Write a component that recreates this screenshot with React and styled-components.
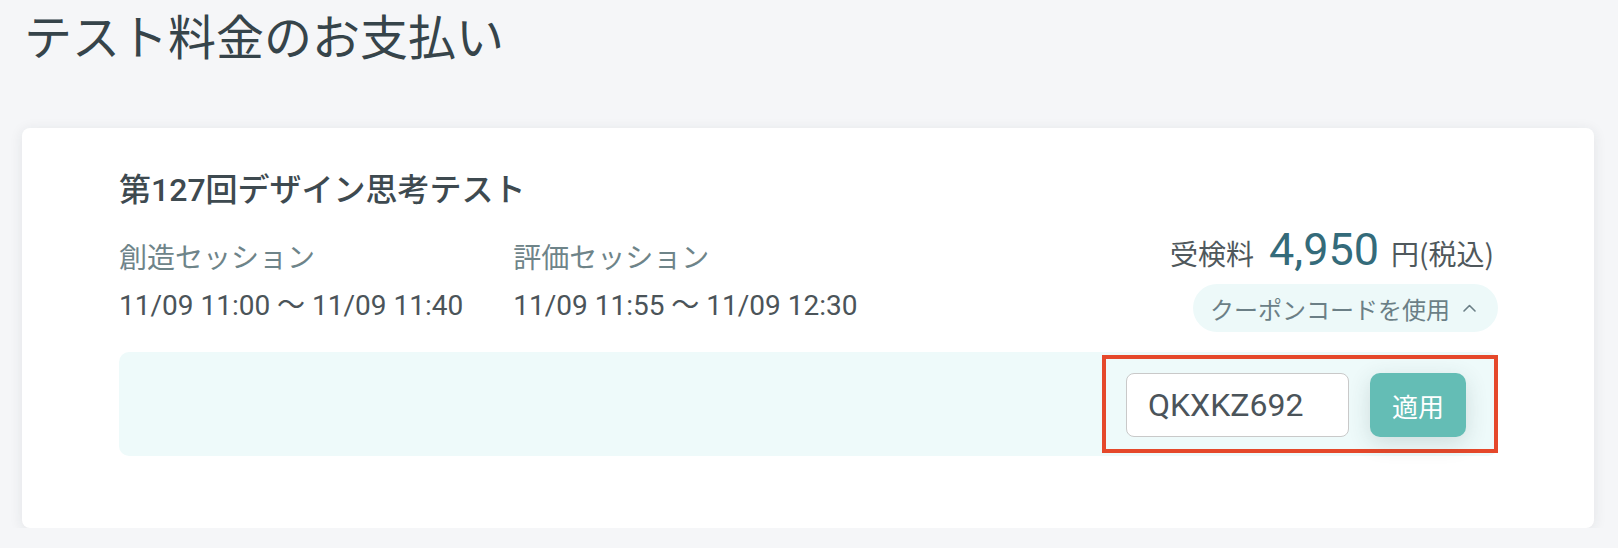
import React from "react";
import styled, { createGlobalStyle } from "styled-components";

const GlobalStyle = createGlobalStyle`
  html, body {
    margin: 0;
    padding: 0;
    background: #f5f6f8;
  }
  body {
    font-family: "Roboto", "Noto Sans CJK JP", sans-serif;
    color: #36444a;
  }
  * { box-sizing: border-box; }
`;

const Page = styled.main`
  padding: 0 24px 0 22px;
`;

const PageTitle = styled.h1`
  margin: 0;
  padding: 3px 0 0 2px;
  font-size: 48px;
  font-weight: 400;
  line-height: 72px;
  color: #36444a;
`;

const Card = styled.section`
  margin-top: 53px;
  background: #ffffff;
  border-radius: 8px;
  box-shadow: 0 2px 14px rgba(30, 40, 60, 0.09);
  padding: 38px 96px 72px 97px;
`;

const TopRow = styled.div`
  display: flex;
  justify-content: space-between;
  align-items: flex-end;
`;

const LeftCol = styled.div`
  display: flex;
  flex-direction: column;
`;

const ExamName = styled.h2`
  margin: 0;
  font-size: 32px;
  font-weight: 500;
  line-height: 48px;
  color: #3e4a50;
`;

const Sessions = styled.div`
  display: flex;
  gap: 50px;
  margin-top: 23px;
`;

const Session = styled.div`
  display: flex;
  flex-direction: column;
`;

const SessionLabel = styled.div`
  font-size: 28px;
  line-height: 44px;
  color: #6e8489;
`;

const SessionTime = styled.div`
  font-size: 28px;
  line-height: 44px;
  margin-top: 3px;
  color: #4b5459;
`;

const RightCol = styled.div`
  display: flex;
  flex-direction: column;
  align-items: flex-end;
  margin-bottom: -4px;
`;

const PriceRow = styled.div`
  display: flex;
  align-items: baseline;
  color: #4f585c;
  padding-right: 4px;
`;

const PriceLabel = styled.span`
  font-size: 28px;
  margin-right: 15px;
`;

const PriceValue = styled.span`
  font-size: 45px;
  line-height: 60px;
  color: #346b7a;
  margin-right: 12px;
`;

const PriceUnit = styled.span`
  font-family: "Noto Sans CJK JP", sans-serif;
  font-size: 28px;
`;

const CouponToggle = styled.button`
  margin-top: 4px;
  display: flex;
  align-items: center;
  gap: 13px;
  height: 48px;
  padding: 0 22px 0 17px;
  border: none;
  border-radius: 24px;
  background: #edf9f9;
  color: #6b7f86;
  font-family: inherit;
  font-size: 24px;
  cursor: pointer;
`;

const Strip = styled.div`
  margin-top: 24px;
  height: 104px;
  border-radius: 10px;
  background: #eefafa;
  display: flex;
  justify-content: flex-end;
  align-items: center;
`;

const CouponForm = styled.form`
  display: flex;
  align-items: center;
  gap: 21px;
  border: 4px solid #e5482b;
  padding: 14px 28px 12px 20px;
`;

const CodeInput = styled.input`
  width: 223px;
  height: 64px;
  border: 1.5px solid #c9c9c9;
  border-radius: 8px;
  background: #ffffff;
  padding: 0 0 0 21px;
  font-family: "Roboto", sans-serif;
  font-size: 32px;
  color: #4b545a;
  outline: none;
`;

const ApplyButton = styled.button`
  width: 96px;
  height: 64px;
  border: none;
  border-radius: 10px;
  background: #64bdb5;
  color: #ffffff;
  font-family: inherit;
  font-size: 26px;
  box-shadow: 0 6px 22px rgba(40, 70, 70, 0.16);
  cursor: pointer;
`;

const ChevronUp = () => (
  <svg width="13" height="8" viewBox="0 0 13 8" fill="none">
    <path d="M1 7 L6.5 1.5 L12 7" stroke="#6b7f86" strokeWidth="1.6" strokeLinecap="round" strokeLinejoin="round" />
  </svg>
);

export default function App() {
  return (
    <>
      <GlobalStyle />
      <Page>
        <PageTitle>テスト料金のお支払い</PageTitle>
        <Card>
          <TopRow>
            <LeftCol>
              <ExamName>第127回デザイン思考テスト</ExamName>
              <Sessions>
                <Session>
                  <SessionLabel>創造セッション</SessionLabel>
                  <SessionTime>11/09 11:00 〜 11/09 11:40</SessionTime>
                </Session>
                <Session>
                  <SessionLabel>評価セッション</SessionLabel>
                  <SessionTime>11/09 11:55 〜 11/09 12:30</SessionTime>
                </Session>
              </Sessions>
            </LeftCol>
            <RightCol>
              <PriceRow>
                <PriceLabel>受検料</PriceLabel>
                <PriceValue>4,950</PriceValue>
                <PriceUnit>円(税込)</PriceUnit>
              </PriceRow>
              <CouponToggle type="button">
                クーポンコードを使用
                <ChevronUp />
              </CouponToggle>
            </RightCol>
          </TopRow>
          <Strip>
            <CouponForm onSubmit={(e) => e.preventDefault()}>
              <CodeInput defaultValue="QKXKZ692" />
              <ApplyButton type="submit">適用</ApplyButton>
            </CouponForm>
          </Strip>
        </Card>
      </Page>
    </>
  );
}
